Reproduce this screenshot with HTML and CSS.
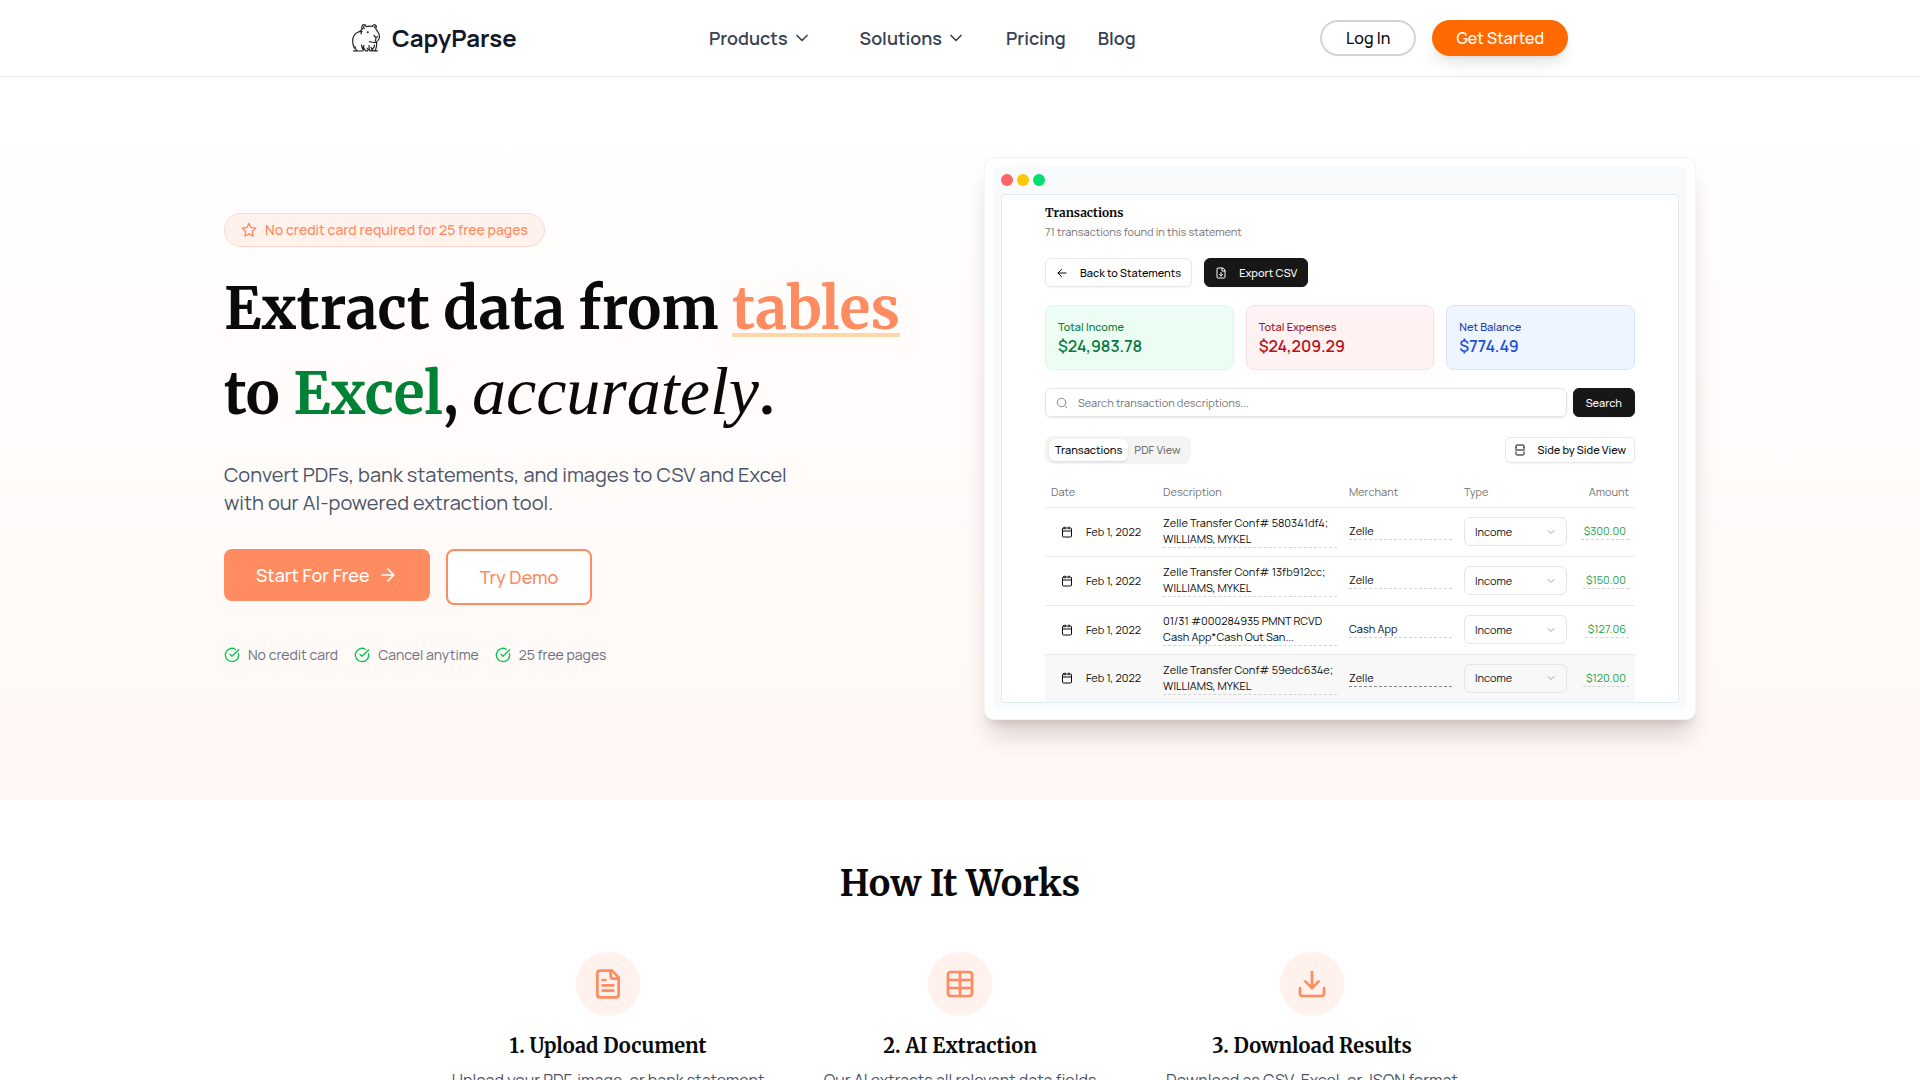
FILE: index.html
```html
<!DOCTYPE html>
<html lang="en">
<head>
<meta charset="utf-8">
<title>CapyParse</title>
<meta name="viewport" content="width=device-width, initial-scale=1">
<link rel="stylesheet" href="styles.css">
</head>
<body>
<svg class="sprite" aria-hidden="true">
  <symbol id="chevron" viewBox="0 0 24 24"><path d="m6 9 6 6 6-6"/></symbol>
  <symbol id="check" viewBox="0 0 24 24"><path d="M21.801 10A10 10 0 1 1 17 3.335"/><path d="m9 11 3 3L22 4"/></symbol>
  <symbol id="calendar" viewBox="0 0 24 24"><path d="M8 2v4M16 2v4M3 10h18"/><rect x="3" y="4" width="18" height="18" rx="2"/></symbol>
</svg>

<header class="site-header">
  <div class="header-inner">
    <a class="brand" href="#">
      <svg class="brand-icon" viewBox="0 0 28 28" aria-hidden="true">
        <path d="M10.200 5C9.300 2.500 10.200.8 11.800.7c1.500 0 2.200.9 2.400 2 2-.8 4.300-.8 6.300-.2.300-1.300 1.300-1.900 2.500-1.600 1.500.4 1.700 2.200.7 3.700 1.200 1.600 2 3.200 2.900 4.700 1 1.700 1 4 .3 5.800-.6 1.600-2 2.700-3.600 3.100"/>
        <path d="M12.200 4.600c-.7-.5-.9-1.500-.2-2M22.300 3.600c.5-.2.800-.7.600-1.200"/>
        <path d="M10.200 5C9.200 6.600 8.200 7.400 6.300 8 2.800 9.600.8 12.600.7 16.500c-.1 3 .7 5.600 1.700 7.800M6.300 8l3.700-.7c-.8.8-1 1.500-.9 2.500"/>
        <path d="M17.300 17.500c2.300.9 4.800 1.200 7 .8M22 11.300c.5 1.500 1.700 2.300 3.500 1.400M24 13.500c0 1.300-.2 2.300-.8 3.300"/>
        <path d="M1.500 26.800h3M5.200 27h5.600c.8-.6.500-1.700-.4-2.300L9.500 21M11 24.300c.3-1.200.6-2 1-2.800M11.600 23.500c.4 1.500 1.200 2.600 2.200 3.300h2c.6-.8.100-2-.8-2.700M3 22.500c.2 1.800 1 3.500 2.500 4.400M17 21.500c-.2 2 .1 4 1 5.300h1.800c.5-1.200.2-2.500-.8-3.300M24.500 18.500c.7 2.600-.3 5.600-1.300 8.300h-2.400c-.6-1.200.1-2.600 1.200-3.500l.5-2.300M24 26.800h1.500"/>
        <circle class="eye" cx="15.800" cy="8.200" r="1"/>
      </svg>
      <span>CapyParse</span>
    </a>
    <nav class="main-nav" aria-label="Main">
      <button class="nav-menu" type="button">Products <svg class="icon i20" aria-hidden="true"><use href="#chevron"/></svg></button>
      <button class="nav-menu" type="button">Solutions <svg class="icon i20" aria-hidden="true"><use href="#chevron"/></svg></button>
      <a href="#pricing">Pricing</a>
      <a href="#blog">Blog</a>
    </nav>
    <div class="header-actions">
      <a class="pill pill-outline" href="#login">Log In</a>
      <a class="pill pill-solid" href="#signup">Get Started</a>
    </div>
  </div>
</header>

<main>
  <section class="hero">
    <div class="hero-inner">
      <div class="hero-copy">
        <p class="badge">
          <svg class="icon i16" viewBox="0 0 24 24" aria-hidden="true"><path d="m12 2 3.100 6.300 6.900 1-5 4.900 1.200 6.900L12 17.800l-6.200 3.300L7 14.200 2 9.300l6.900-1z"/></svg>
          No credit card required for 25 free pages
        </p>
        <h1>Extract data from <span class="hl-tables">tables</span><br>to <span class="hl-excel">Excel</span>, <em>accurately</em>.</h1>
        <p class="lead">Convert PDFs, bank statements, and images to CSV and Excel with our AI-powered extraction tool.</p>
        <div class="cta">
          <a class="btn btn-primary" href="#start">Start For Free
            <svg class="icon i20" viewBox="0 0 24 24" aria-hidden="true"><path d="M5 12h14M12 5l7 7-7 7"/></svg></a>
          <a class="btn btn-outline" href="#demo">Try Demo</a>
        </div>
        <ul class="perks">
          <li><svg class="icon i16" aria-hidden="true"><use href="#check"/></svg>No credit card</li>
          <li><svg class="icon i16" aria-hidden="true"><use href="#check"/></svg>Cancel anytime</li>
          <li><svg class="icon i16" aria-hidden="true"><use href="#check"/></svg>25 free pages</li>
        </ul>
      </div>

      <div class="preview">
        <div class="window">
          <div class="dots"><span class="dot red"></span><span class="dot yellow"></span><span class="dot green"></span></div>
          <div class="screen">
            <h2 class="app-title">Transactions</h2>
            <p class="app-sub">71 transactions found in this statement</p>
            <div class="app-actions">
              <button class="app-btn" type="button"><svg class="icon i12" viewBox="0 0 24 24" aria-hidden="true"><path d="M20 12H4M11 5l-7 7 7 7"/></svg>Back to Statements</button>
              <button class="app-btn dark" type="button"><svg class="icon i12" viewBox="0 0 24 24" aria-hidden="true"><path d="M15 2H6a2 2 0 0 0-2 2v16a2 2 0 0 0 2 2h12a2 2 0 0 0 2-2V7zM14 2v6h6M12 11v7M9 15l3 3 3-3"/></svg>Export CSV</button>
            </div>
            <div class="totals">
              <div class="total income"><span>Total Income</span><strong>$24,983.78</strong></div>
              <div class="total expense"><span>Total Expenses</span><strong>$24,209.29</strong></div>
              <div class="total balance"><span>Net Balance</span><strong>$774.49</strong></div>
            </div>
            <form class="search">
              <label class="search-box">
                <svg class="icon i12" viewBox="0 0 24 24" aria-hidden="true"><circle cx="11" cy="11" r="8.500"/><path d="m22 22-4.500-4.500"/></svg>
                <input type="text" aria-label="Search transaction descriptions" placeholder="Search transaction descriptions...">
              </label>
              <button class="app-btn dark" type="button">Search</button>
            </form>
            <div class="view-bar">
              <div class="tabs">
                <button class="tab active" type="button">Transactions</button>
                <button class="tab" type="button">PDF View</button>
              </div>
              <button class="app-btn small" type="button"><svg class="icon i12" viewBox="0 0 24 24" aria-hidden="true"><path d="M4 8V4a2 2 0 0 1 2-2h12a2 2 0 0 1 2 2v4M4 16v4a2 2 0 0 0 2 2h12a2 2 0 0 0 2-2v-4M3 12h18M4 8h1M19 8h1"/></svg>Side by Side View</button>
            </div>
            <table class="tx">
              <colgroup><col class="c-date"><col class="c-desc"><col class="c-merchant"><col class="c-type"><col></colgroup>
              <thead>
                <tr><th>Date</th><th>Description</th><th>Merchant</th><th>Type</th><th class="num">Amount</th></tr>
              </thead>
              <tbody>
                <tr>
                  <td><span class="date"><svg class="icon i12" aria-hidden="true"><use href="#calendar"/></svg>Feb 1, 2022</span></td>
                  <td><span class="edit">Zelle Transfer Conf# 580341df4;<br>WILLIAMS, MYKEL</span></td>
                  <td><span class="edit">Zelle</span></td>
                  <td><span class="pick"><select aria-label="Type"><option>Income</option></select><svg class="icon i12" aria-hidden="true"><use href="#chevron"/></svg></span></td>
                  <td class="num"><span class="edit amount">$300.00</span></td>
                </tr>
                <tr>
                  <td><span class="date"><svg class="icon i12" aria-hidden="true"><use href="#calendar"/></svg>Feb 1, 2022</span></td>
                  <td><span class="edit">Zelle Transfer Conf# 13fb912cc;<br>WILLIAMS, MYKEL</span></td>
                  <td><span class="edit">Zelle</span></td>
                  <td><span class="pick"><select aria-label="Type"><option>Income</option></select><svg class="icon i12" aria-hidden="true"><use href="#chevron"/></svg></span></td>
                  <td class="num"><span class="edit amount">$150.00</span></td>
                </tr>
                <tr>
                  <td><span class="date"><svg class="icon i12" aria-hidden="true"><use href="#calendar"/></svg>Feb 1, 2022</span></td>
                  <td><span class="edit">01/31 #000284935 PMNT RCVD<br>Cash App*Cash Out San...</span></td>
                  <td><span class="edit">Cash App</span></td>
                  <td><span class="pick"><select aria-label="Type"><option>Income</option></select><svg class="icon i12" aria-hidden="true"><use href="#chevron"/></svg></span></td>
                  <td class="num"><span class="edit amount">$127.06</span></td>
                </tr>
                <tr class="hovered">
                  <td><span class="date"><svg class="icon i12" aria-hidden="true"><use href="#calendar"/></svg>Feb 1, 2022</span></td>
                  <td><span class="edit">Zelle Transfer Conf# 59edc634e;<br>WILLIAMS, MYKEL</span></td>
                  <td><span class="edit focus">Zelle</span></td>
                  <td><span class="pick"><select aria-label="Type"><option>Income</option></select><svg class="icon i12" aria-hidden="true"><use href="#chevron"/></svg></span></td>
                  <td class="num"><span class="edit amount">$120.00</span></td>
                </tr>
              </tbody>
            </table>
          </div>
        </div>
      </div>
    </div>
  </section>

  <section class="how">
    <h2>How It Works</h2>
    <div class="steps">
      <article class="step">
        <span class="step-icon"><svg class="icon i32" viewBox="0 0 24 24" aria-hidden="true"><path d="M15 2H6a2 2 0 0 0-2 2v16a2 2 0 0 0 2 2h12a2 2 0 0 0 2-2V7z"/><path d="M14 2v4a2 2 0 0 0 2 2h4M10 9H8M16 13H8M16 17H8"/></svg></span>
        <h3>1. Upload Document</h3>
        <p>Upload your PDF, image, or bank statement</p>
      </article>
      <article class="step">
        <span class="step-icon"><svg class="icon i32" viewBox="0 0 24 24" aria-hidden="true"><rect x="3" y="3" width="18" height="18" rx="2"/><path d="M12 3v18M3 9h18M3 15h18"/></svg></span>
        <h3>2. AI Extraction</h3>
        <p>Our AI extracts all relevant data fields</p>
      </article>
      <article class="step">
        <span class="step-icon"><svg class="icon i32" viewBox="0 0 24 24" aria-hidden="true"><path d="M21 15v4a2 2 0 0 1-2 2H5a2 2 0 0 1-2-2v-4M7 10l5 5 5-5M12 15V3"/></svg></span>
        <h3>3. Download Results</h3>
        <p>Download as CSV, Excel, or JSON format</p>
      </article>
    </div>
  </section>
</main>
</body>
</html>
```
FILE: styles.css
```css
*, *::before, *::after { box-sizing: border-box; }

:root {
  --coral: #ff8b60;
  --ink: #0a0a0a;
  --slate: #4a5568;
  --serif: "Merriweather", "Liberation Serif", serif;
  --sans: "Manrope", "Inter", sans-serif;
}

body {
  margin: 0;
  background: #fff;
  color: var(--ink);
  font: 16px/24px var(--sans);
}

h1, h2, h3, p, ul { margin: 0; padding: 0; }
h1, h2, h3 { font-family: var(--serif); font-weight: 700; }
a { color: inherit; text-decoration: none; }
button, input, select { font: inherit; color: inherit; }
button { margin: 0; padding: 0; border: 0; background: none; cursor: pointer; }

.sprite { display: none; }
.icon { flex: none; fill: none; stroke: currentColor; stroke-width: 2; stroke-linecap: round; stroke-linejoin: round; }
.i12 { width: 12px; height: 12px; }
.i16 { width: 16px; height: 16px; }
.i20 { width: 20px; height: 20px; }
.i32 { width: 32px; height: 32px; }

/* Header */
.site-header { border-bottom: 1px solid #e5e7eb; background: #fff; }
.header-inner {
  display: flex;
  align-items: center;
  justify-content: space-between;
  max-width: 1280px;
  margin: 0 auto;
  padding: 20px 32px;
}
.brand { display: flex; align-items: center; gap: 12px; color: #111827; font-size: 24px; line-height: 36px; font-weight: 700; }
.brand-icon { width: 28px; height: 28px; fill: none; stroke: #222; stroke-width: 1.2; stroke-linecap: round; stroke-linejoin: round; }
.brand-icon .eye { fill: #222; stroke: none; }
.main-nav { display: flex; align-items: center; gap: 32px; color: #374151; font-size: 18px; line-height: 28px; font-weight: 600; }
.nav-menu { display: flex; align-items: center; gap: 4px; padding: 0 8px; }
.header-actions { display: flex; align-items: center; gap: 16px; }
.pill { padding: 6px 24px; border-radius: 18px; font-size: 16px; line-height: 24px; font-weight: 500; }
.pill-outline { border: 2px solid #d1d5db; padding: 4px 24px; }
.pill-solid { background: #ff6900; color: #fff; box-shadow: 0 10px 15px -3px rgb(0 0 0 / 10%), 0 4px 6px -4px rgb(0 0 0 / 10%); }

/* Hero */
.hero { background: linear-gradient(#fff, #fff8f5); padding: 80px 32px; }
.hero-inner {
  display: grid;
  grid-template-columns: repeat(2, minmax(0, 1fr));
  align-items: center;
  gap: 48px;
  max-width: 1472px;
  margin: 0 auto;
}
.badge {
  display: inline-flex;
  align-items: center;
  gap: 8px;
  padding: 6px 16px;
  border: 1px solid #ffd9cb;
  border-radius: 17px;
  background: #fff1ec;
  color: var(--coral);
  font-size: 14px;
  line-height: 20px;
  font-weight: 500;
}
h1 { margin-top: 20px; font-size: 57px; line-height: 85px; white-space: nowrap; }
h1 em { font-family: "Liberation Serif", serif; font-size: 68px; line-height: 1; font-weight: 400; }
.hl-tables { color: var(--coral); text-decoration: underline; text-decoration-color: #ffd6a8; text-decoration-thickness: 4px; text-underline-offset: 4px; }
.hl-excel { color: #008236; }
.lead { max-width: 576px; margin-top: 24px; color: var(--slate); font-size: 20px; line-height: 28px; }
.cta { display: flex; align-items: flex-start; gap: 16px; margin-top: 32px; }
.btn { display: flex; align-items: center; gap: 8px; padding: 12px 32px; border-radius: 8px; font-size: 18px; line-height: 28px; font-weight: 500; }
.btn-primary { background: var(--coral); color: #fff; }
.btn-outline { border: 2px solid var(--coral); background: #fff; color: var(--coral); }
.perks { display: flex; gap: 16px; margin-top: 40px; color: #6a7282; font-size: 14px; line-height: 20px; list-style: none; }
.perks li { display: flex; align-items: center; gap: 8px; }
.perks .icon { color: #00c950; }

/* Product preview window */
.preview { padding: 8px; border: 1px solid #f3f4f6; border-radius: 10px; background: #fff; box-shadow: 0 20px 25px -5px rgb(60 30 20 / 18%), 0 8px 10px -6px rgb(60 30 20 / 14%); }
.window { padding: 8px; border-radius: 8px; background: #f8fafc; }
.dots { display: flex; gap: 4px; margin-bottom: 8px; }
.dot { width: 12px; height: 12px; border-radius: 50%; }
.red { background: #ff6467; }
.yellow { background: #ffc800; }
.green { background: #05df72; }
.screen { padding: 8px 43px 0; border: 1px solid #e2e8f0; border-radius: 4px; background: #fff; font-size: 11px; line-height: 16px; }
.app-title { font-size: 12px; line-height: 20px; }
.app-sub { margin-top: 1px; color: #737373; }
.app-actions { display: flex; gap: 12px; margin-top: 18px; }
.app-btn { display: flex; align-items: center; gap: 12px; height: 29px; padding: 0 10px; border: 1px solid #e8e8e8; border-radius: 6px; background: #fff; font-weight: 500; box-shadow: 0 1px 2px rgb(0 0 0 / 5%); white-space: nowrap; }
.app-btn.dark { border-color: #171717; background: #171717; color: #fafafa; }
.app-btn.small { height: 26px; padding: 0 8px; }
.totals { display: grid; grid-template-columns: repeat(3, 1fr); gap: 12px; margin-top: 18px; }
.total { display: grid; padding: 12px; border: 1px solid; border-radius: 8px; font-weight: 500; }
.total span { line-height: 18px; }
.total strong { font-size: 16px; line-height: 21px; font-weight: 600; }
.income { border-color: #d9fbe6; background: #ecfdf3; color: #0c7a3d; }
.expense { border-color: #fbdfe2; background: #fef2f2; color: #a3142a; }
.expense strong { color: #b91218; }
.balance { border-color: #d7e5fa; background: #eef5ff; color: #2240b0; }
.balance strong { color: #1d4ed8; }
.search { display: flex; gap: 6px; margin-top: 18px; }
.search-box { display: flex; flex: 1; align-items: center; gap: 10px; padding: 0 10px; border: 1px solid #e5e5e5; border-radius: 6px; color: #8a8a8a; box-shadow: 0 1px 2px rgb(0 0 0 / 10%); }
.search-box input { flex: 1; min-width: 0; padding: 0; border: 0; outline: 0; background: none; }
.search-box input::placeholder { color: #737373; opacity: 1; }
.search .app-btn { padding: 0 12px; }
.view-bar { display: flex; align-items: center; justify-content: space-between; margin-top: 19px; }
.tabs { display: flex; padding: 3px 4px; border-radius: 8px; background: #f4f4f5; }
.tab { padding: 3px 6px; border-radius: 6px; color: #737373; font-weight: 500; }
.tab.active { background: #fff; color: var(--ink); box-shadow: 0 1px 2px rgb(0 0 0 / 12%); }
.tx { width: 100%; margin-top: 14px; border-collapse: collapse; table-layout: fixed; }
.c-date { width: 19%; }
.c-desc { width: 31.5%; }
.c-merchant { width: 19.5%; }
.c-type { width: 19.5%; }
.tx th { height: 29px; padding: 0 6px; color: #737373; font-weight: 400; text-align: left; }
.tx td { height: 49px; padding: 0 6px; border-top: 1px solid #e8e8e8; white-space: nowrap; }
.tx tr:last-child td { height: 48px; }
.tx .num { text-align: right; }
.date { display: flex; align-items: center; gap: 13px; padding-left: 10px; }
.edit { display: block; border-bottom: 1px dashed #d4d4d4; }
.edit.focus { border-color: #888; }
.edit.amount { display: inline-block; padding: 0 3px; color: #16a34a; }
.pick { display: grid; align-items: center; }
.pick select, .pick .icon { grid-area: 1 / 1; }
.pick select { width: 100%; height: 29px; padding: 0 10px; border: 1px solid #e5e5e5; border-radius: 6px; background: transparent; appearance: none; }
.pick .icon { justify-self: end; margin-right: 10px; color: #a3a3a3; pointer-events: none; }
.hovered { background: #f8f8f8; }

/* Steps */
.how { padding: 64px 32px; text-align: center; }
.how h2 { font-size: 36px; line-height: 40px; }
.steps { display: grid; grid-template-columns: repeat(3, 1fr); gap: 32px; max-width: 1024px; margin: 48px auto 0; }
.step-icon { display: inline-flex; align-items: center; justify-content: center; width: 64px; height: 64px; border-radius: 50%; background: #fff1ec; color: var(--coral); }
.step h3 { margin-top: 16px; font-size: 20px; line-height: 28px; }
.step p { margin-top: 8px; color: var(--slate); }
```
